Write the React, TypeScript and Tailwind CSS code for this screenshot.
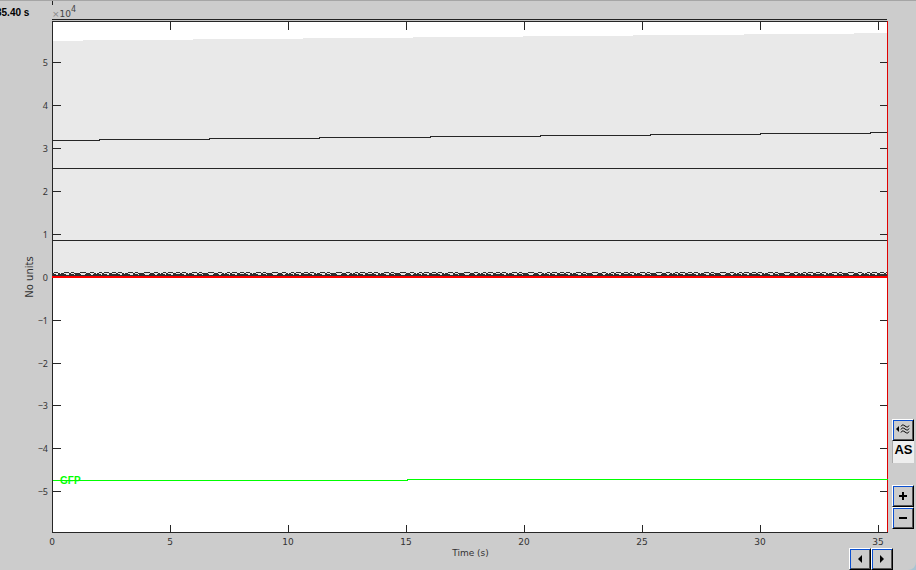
import { useLayoutEffect, useRef, useState } from 'react';

const X_MAX = 35.4;
const xTicks = [0, 5, 10, 15, 20, 25, 30, 35];
const yTicks = [5, 4, 3, 2, 1, 0, -1, -2, -3, -4, -5];

const LEFT = 52;
const TOP = 2;
const Y_MAX = 5.965;
const Y_MIN = -5.95;

const minus = (n: number) => (n < 0 ? `−${-n}` : `${n}`);

// Pixel rows of the noise band just above zero, repeated along the axis
const noise = [
  '..####......#####..###......######....####.....###..#####...####',
  '##....##.###.....##...######......####....##.##...##.....###....',
  '####..########...#####.######....######..########.#####..#######',
  '################################################################',
];

function noisePath(width: number, y: number) {
  let d = '';
  for (let i = 0; i < width; i++) {
    noise.forEach((row, r) => {
      if (row[i % 64] === '#') d += `M${LEFT + i} ${y + r}h1v1h-1z`;
    });
  }
  return d;
}

function Chart() {
  const ref = useRef<HTMLDivElement>(null);
  const [size, setSize] = useState({ w: 888, h: 527 });

  useLayoutEffect(() => {
    const el = ref.current;
    if (!el) return;
    const measure = () => setSize({ w: el.clientWidth, h: el.clientHeight });
    measure();
    const ro = new ResizeObserver(measure);
    ro.observe(el);
    return () => ro.disconnect();
  }, []);

  const right = size.w - 1;
  const bottom = size.h - 14;
  const plotW = right - LEFT;
  const plotH = bottom - TOP;
  const px = (t: number) => Math.round(LEFT + (t / X_MAX) * plotW);
  const py = (v: number) => Math.round(TOP + ((Y_MAX - v) / (Y_MAX - Y_MIN)) * plotH);
  const zero = py(0);
  const gfp = py(-4.73);

  // Slow drift: the trace climbs one pixel every 4.67 s
  const drift = (first: number, y: number) => {
    let d = `M${LEFT} ${y}`;
    for (let t = first, i = 1; t < X_MAX; t += 4.67, i++) d += `H${px(t)}V${y - i}`;
    return `${d}H${right}`;
  };

  return (
    <div ref={ref} className="min-h-80 min-w-0 flex-1">
      <svg width={size.w} height={size.h} className="block overflow-visible" shapeRendering="crispEdges" role="img" aria-label="Channel traces over time">
        <rect x={LEFT} y={0} width={plotW} height={1} fill="#222" />
        <rect x={LEFT} y={1} width={plotW} height={1} fill="#c4c4c4" />
        <rect x={LEFT} y={TOP} width={plotW} height={plotH} fill="#fff" />
        <path d={`${drift(1.3, py(5.51))}V${zero}H${LEFT}z`} fill="#e9e9e9" />

        <g fill="none" stroke="#262626" transform="translate(0.5 0.5)">
          <path d={drift(2, py(3.195))} />
          <path d={`M${LEFT} ${py(2.54)}H${right}M${LEFT} ${py(0.86)}H${right}`} />
          <path d={`M${LEFT} ${bottom}V${TOP}H${right}M${LEFT} ${bottom}H${right}`} />
          {xTicks.slice(1).map((t) => (
            <path key={t} d={`M${px(t)} ${TOP}v8M${px(t)} ${bottom}v-8`} />
          ))}
          {yTicks.map((v) => (
            <path key={v} d={`M${LEFT} ${py(v)}h8M${right} ${py(v)}h-8`} />
          ))}
        </g>

        <path d={noisePath(plotW, zero - 5)} fill="#303030" />
        <rect x={LEFT} y={zero - 1} width={plotW + 1} height={2} fill="#f00" />
        <rect x={right} y={TOP} width={1} height={plotH} fill="#e00000" />
        <path d={`M${LEFT} ${gfp}H${px(15.05)}v-1H${right}`} transform="translate(0.5 0.5)" fill="none" stroke="#0f0" />

        <text x={60} y={gfp + 4} fill="#0f0" className="font-['Liberation_Sans',sans-serif] text-[10px] font-bold">GFP</text>

        <g fill="#333" className="font-['DejaVu_Sans',sans-serif] text-[9px]">
          {xTicks.map((t) => (
            <text key={t} x={px(t)} y={bottom + 13} textAnchor="middle">{t}</text>
          ))}
          {yTicks.map((v) => (
            <text key={v} x={48} y={py(v) + 4} textAnchor="end" className="font-['Noto_Sans',sans-serif]">{minus(v)}</text>
          ))}
          <text transform={`translate(33 ${zero}) rotate(-90)`} textAnchor="middle" className="text-[10px]">No units</text>
        </g>
      </svg>
    </div>
  );
}

const btn = 'flex h-[22px] w-[22px] items-center justify-center border border-t-white border-l-white border-r-black border-b-black bg-[#ccc] text-black shadow-[inset_1px_1px_0_#0a4fd0,inset_-1px_-1px_0_#555]';

export default function App() {
  return (
    <div className="bg-[#a9c4d2]">
      <div className="flex min-h-screen flex-col rounded-br-lg border-t border-[#a5a5a5] bg-[#ccc] font-['DejaVu_Sans',sans-serif]">
        <header className="flex h-[18px] overflow-x-clip">
          <div className="flex w-[52px] items-center whitespace-nowrap pt-1.5">
            <span className="-ml-1 font-['Liberation_Sans',sans-serif] text-[10px] leading-4 font-bold text-black">35.40 s</span>
          </div>
          <div className="flex flex-col justify-between">
            <div className="h-1 w-px bg-[#222]" />
            <div className="flex text-[9px] leading-[10px] text-[#444]">
              <span className="text-[#888]">×</span>10
              <sup className="-top-1 text-[8px] leading-[10px]">4</sup>
            </div>
          </div>
        </header>

        <main className="flex flex-1">
          <div className="flex min-w-0 flex-1">
            <Chart />
          </div>
          <aside className="flex w-7 flex-col items-end justify-end pr-0.5 pb-[17px]">
            <button className={btn} aria-label="Stack traces">
              <svg width="18" height="18" viewBox="0 0 18 18" fill="none" stroke="black">
                <path d="M5 5v6L2 8z" fill="black" stroke="none" />
                <path d="M7 5.500c1-2 2-2 4-.5s3 1.500 4-.5M7 8.500c1-2 2-2 4-.5s3 1.500 4-.5M7 11.500c1-2 2-2 4-.5s3 1.500 4-.5" />
              </svg>
            </button>
            <div className="mb-[22px] h-[22px] w-[22px] border-l border-[#aaa] bg-[#eee] text-center font-['Liberation_Sans',sans-serif] text-[13px] leading-[18px] font-bold text-black">AS</div>
            <button className={btn} aria-label="Increase scale">
              <svg width="10" height="10" viewBox="0 0 10 10"><path d="M4 1h2v3h3v2h-3v3h-2v-3h-3v-2h3z" /></svg>
            </button>
            <button className={btn} aria-label="Decrease scale">
              <svg width="10" height="10" viewBox="0 0 10 10"><path d="M1 4h8v2h-8z" /></svg>
            </button>
          </aside>
        </main>

        <footer className="flex h-6 items-end pr-[23px]">
          {/* negative margin takes back the button width, so the label centres under the plot */}
          <div className="-mr-10 flex-1 self-start pl-[52px] pt-px text-center text-[9px] leading-3 text-[#333]">Time (s)</div>
          <button className={btn} aria-label="Scroll left">
            <svg width="8" height="8" viewBox="0 0 8 8"><path d="M6 0v8L2 4z" /></svg>
          </button>
          <button className={btn} aria-label="Scroll right">
            <svg width="8" height="8" viewBox="0 0 8 8"><path d="M2 0v8L6 4z" /></svg>
          </button>
        </footer>
      </div>
    </div>
  );
}
